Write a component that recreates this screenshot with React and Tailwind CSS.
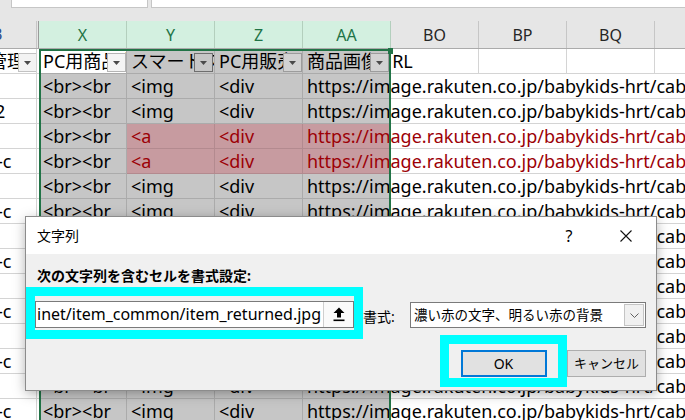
import React from 'react';

const SANS = "font-[family-name:'Noto_Sans','Noto_Sans_CJK_JP',sans-serif]";
const IMG_URL = 'https://image.rakuten.co.jp/babykids-hrt/cabinet/item_common/item_returned.jpg';

const rows = Array.from({ length: 14 }, (_, i) => {
  const n = i + 2;
  const pink = n === 4 || n === 5;
  return {
    n,
    pink,
    left: n === 3 ? '2' : n >= 5 && n % 2 === 1 ? '-c' : '',
    y: pink ? '<a' : '<img',
  };
});

const FilterBtn = ({ className }) => (
  <div className={`absolute top-[4px] w-[19px] h-[19px] border flex items-center justify-center ${className}`}>
    <svg width="7" height="4" viewBox="0 0 7 4">
      <path d="M0 0h7L3.5 4z" fill="#4a4a4a" />
    </svg>
  </div>
);

const HeaderRow = () => (
  <div className="flex h-[28px] shrink-0 bg-[#e6e6e6] border-b border-[#ababab] text-[16px]">
    <div className="w-[37px] shrink-0 overflow-hidden whitespace-nowrap border-r border-[#c6c6c6] text-[#2f4f8f] leading-[27px]">
      <span className="block -ml-[8px]">B</span>
    </div>
    <div className="w-[2px] shrink-0 border-r border-[#9a9a9a]" />
    {['X', 'Y', 'Z', 'AA'].map((h) => (
      <div key={h} className="w-[88px] shrink-0 bg-[#d3f0e0] text-[#217346] border-r border-[#b3cfbd] flex items-center justify-center">
        {h}
      </div>
    ))}
    {['BO', 'BP', 'BQ'].map((h) => (
      <div key={h} className="w-[88px] shrink-0 text-[#262626] border-r border-[#c6c6c6] flex items-center justify-center">
        {h}
      </div>
    ))}
    <div className="flex-1" />
  </div>
);

const TitleRow = () => (
  <div className="flex h-[25px] shrink-0 text-[18px] leading-[24px] whitespace-nowrap">
    <div className="relative w-[37px] shrink-0 overflow-hidden border-r border-b border-[#d4d4d4]">
      <span className="block -ml-[11px]">管理</span>
      <FilterBtn className="left-[18px] bg-[#f3f3f3] border-[#c2c2c2]" />
    </div>
    <div className="w-[2px] shrink-0 border-b border-[#d4d4d4]" />
    <div className="relative w-[88px] shrink-0 overflow-hidden pl-[4px] bg-white border-r border-b border-[#ababab]">
      PC用商品名
      <FilterBtn className="left-[68px] bg-[#f4f4f4] border-[#b4b4b4]" />
    </div>
    <div className="relative w-[88px] shrink-0 overflow-hidden pl-[4px] bg-[#c6c6c6] border-r border-b border-[#ababab]">
      スマートフォン
      <FilterBtn className="left-[67px] bg-[#c6c6c6] border-[#6e6e6e]" />
    </div>
    <div className="relative w-[88px] shrink-0 overflow-hidden pl-[4px] bg-[#c6c6c6] border-r border-b border-[#ababab]">
      PC用販売
      <FilterBtn className="left-[68px] bg-[#d2d2d2] border-[#9c9c9c]" />
    </div>
    <div className="relative w-[88px] shrink-0 pl-[4px] bg-[#c6c6c6] border-r border-b border-[#ababab]">
      商品画像URL
      <FilterBtn className="left-[67px] bg-[#d2d2d2] border-[#9c9c9c]" />
    </div>
    <div className="w-[88px] shrink-0 border-r border-b border-[#d4d4d4]" />
    <div className="w-[88px] shrink-0 border-r border-b border-[#d4d4d4]" />
    <div className="w-[88px] shrink-0 border-r border-b border-[#d4d4d4]" />
    <div className="flex-1 border-b border-[#d4d4d4]" />
  </div>
);

const DataRow = ({ r }) => {
  const tint = r.pink ? 'bg-[#c79ba0] text-[#9c0006] border-[#b38a8f]' : 'bg-[#c6c6c6] border-[#ababab]';
  return (
    <div className="flex h-[25px] shrink-0 text-[18px] leading-[24px] whitespace-nowrap">
      <div className="w-[37px] shrink-0 overflow-hidden border-r border-b border-[#d4d4d4]">
        {r.left && <span className={r.left === '2' ? 'block -ml-[5px]' : 'block -ml-[3px]'}>{r.left}</span>}
      </div>
      <div className="w-[2px] shrink-0 border-b border-[#d4d4d4]" />
      <div className="w-[88px] shrink-0 overflow-hidden pl-[4px] bg-[#c6c6c6] border-r border-b border-[#ababab]">
        {'<br><br'}
      </div>
      <div className={`w-[88px] shrink-0 overflow-hidden pl-[4px] border-r border-b ${tint}`}>{r.y}</div>
      <div className={`w-[88px] shrink-0 overflow-hidden pl-[4px] border-r border-b ${tint}`}>{'<div'}</div>
      <div className={`w-[88px] shrink-0 pl-[4px] border-r border-b ${tint}`}>{IMG_URL}</div>
      <div className="flex-1 border-b border-[#d4d4d4]" />
    </div>
  );
};

const Dialog = () => (
  <div className="absolute left-[26px] top-[217px] w-[630px] h-[173px] flex flex-col bg-[#f0f0f0] text-black shadow-[0_0_0_1px_#8c8c8c,0_3px_12px_rgba(0,0,0,0.35)]">
    {/* title bar */}
    <div className="h-[37px] shrink-0 bg-white flex items-center text-[14px]">
      <span className="ml-[11px]">文字列</span>
      <span className="ml-auto w-[20px] text-center text-[16px]">?</span>
      <svg className="ml-[41px] mr-[24px]" width="12" height="12" viewBox="0 0 12 12">
        <path d="M0.5 0.5L11.5 11.5M11.5 0.5L0.5 11.5" stroke="#111" strokeWidth="1.1" />
      </svg>
    </div>

    <div className="pl-[11px] pt-[12px] text-[14px] font-bold leading-[20px]">次の文字列を含むセルを書式設定:</div>

    {/* value + format */}
    <div className="mt-[1px] flex items-start">
      <div className="w-[337px] h-[52px] shrink-0 border-[9px] border-[#00ffff] pt-[5px]">
        <div className="flex h-[27px] bg-white border border-[#7a7a7a]">
          <div className="flex-1 overflow-hidden whitespace-nowrap pl-[1px] text-[16px] leading-[25px]">
            inet/item_common/item_returned.jpg
          </div>
          <div className="w-[30px] border-l border-[#cfcfcf] bg-[#fafafa] flex items-center justify-center">
            <svg width="12" height="15" viewBox="0 0 12 15">
              <path d="M6 0.5L11.5 6H8V10.5H4V6H0.5z" fill="#000" />
              <rect x="0.5" y="12.5" width="11" height="1.6" fill="#000" />
            </svg>
          </div>
        </div>
      </div>
      <div className="w-[47px] shrink-0 mt-[20px] text-[14px] leading-[20px]">書式:</div>
      <div className="mt-[15px] w-[236px] h-[26px] bg-white border border-[#7a7a7a] flex items-center">
        <span className="pl-[3px] text-[13.5px] whitespace-nowrap">濃い赤の文字、明るい赤の背景</span>
        <div className="ml-auto mr-[1px] w-[20px] h-[22px] border border-[#c4c4c4] bg-[#f0f0f0] flex items-center justify-center">
          <svg width="9" height="5" viewBox="0 0 9 5">
            <path d="M0.5 0.5L4.5 4.5L8.5 0.5" stroke="#606060" fill="none" strokeWidth="1" />
          </svg>
        </div>
      </div>
    </div>

    {/* buttons */}
    <div className="-mt-[4px] ml-[414px] flex items-start">
      <div className="w-[127px] h-[52px] shrink-0 border-[9px] border-[#00ffff] pt-[6px] flex justify-center">
        <div className="w-[86px] h-[27px] border-2 border-[#0078d7] bg-[#e1e1e1] flex items-center justify-center text-[14px]">
          OK
        </div>
      </div>
      <div className="mt-[15px] w-[79px] h-[27px] border border-[#adadad] bg-[#e1e1e1] flex items-center justify-center text-[13px]">
        キャンセル
      </div>
    </div>
  </div>
);

export default function App() {
  return (
    <div className={`relative w-[685px] h-[420px] overflow-hidden bg-white text-black flex flex-col ${SANS}`}>
      {/* formula bar edge */}
      <div className="flex h-[21px] shrink-0 bg-[#e6e6e6]">
        <div className="ml-[11px] w-[137px] h-[8px] bg-white border border-t-0 border-[#c6c6c6]" />
        <div className="ml-[3px] flex-1 h-[8px] bg-white border border-t-0 border-r-0 border-[#c6c6c6]" />
      </div>

      <HeaderRow />
      <TitleRow />
      {rows.map((r) => (
        <DataRow key={r.n} r={r} />
      ))}

      {/* selection outline */}
      <div className="absolute left-[39px] top-[49px] w-[352px] h-[400px] border-2 border-b-0 border-[#217346] pointer-events-none" />
      <div className="absolute left-[388px] top-[48px] w-[5px] h-[6px] bg-[#217346]" />

      <Dialog />
    </div>
  );
}
